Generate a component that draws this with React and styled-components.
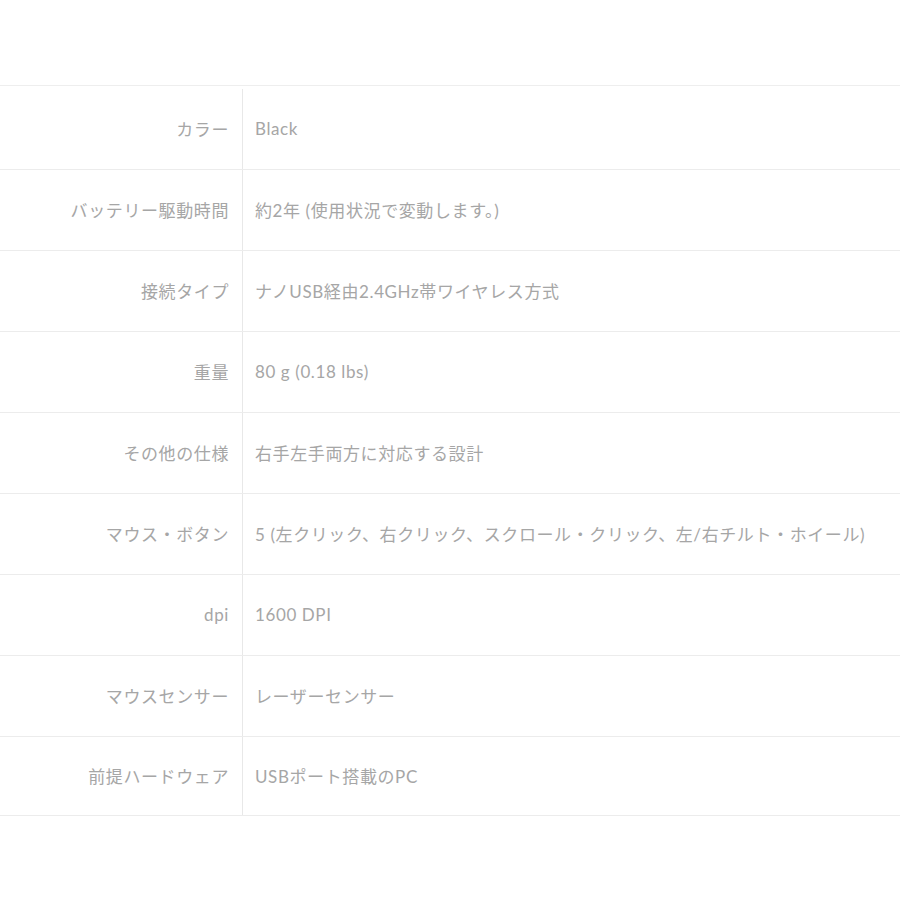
import React from "react";
import styled, { createGlobalStyle } from "styled-components";

const Global = createGlobalStyle`
  html, body { margin: 0; padding: 0; background: #fff; }
  body { font-family: Lato, "Noto Sans CJK JP", sans-serif; }
`;

const Page = styled.div`
  width: 900px;
  height: 900px;
  padding-top: 85px;
  box-sizing: border-box;
`;

const Table = styled.div`
  border-top: 1px solid #eeeeee;
  padding-top: 3px;
  display: flex;
  flex-direction: column;
`;

const Row = styled.div`
  display: grid;
  grid-template-columns: 243px 1fr;
  height: ${(p) => (p.$last ? 79 : 81)}px;
  box-sizing: border-box;
  border-bottom: 1px solid #ececec;
`;

const Cell = styled.div`
  display: flex;
  align-items: center;
  padding-bottom: 2px;
  font-size: 17px;
  font-weight: 400;
  letter-spacing: 0.6px;
  color: #a6a6a6;
  white-space: nowrap;
`;

const Label = styled(Cell)`
  justify-content: flex-end;
  padding-right: 13px;
  border-right: 1px solid #e8e8e8;
`;

const Value = styled(Cell)`
  padding-left: 12px;
`;

const rows = [
  ["カラー", "Black"],
  ["バッテリー駆動時間", "約2年 (使用状況で変動します。)"],
  ["接続タイプ", "ナノUSB経由2.4GHz帯ワイヤレス方式"],
  ["重量", "80 g (0.18 lbs)"],
  ["その他の仕様", "右手左手両方に対応する設計"],
  ["マウス・ボタン", "5 (左クリック、右クリック、スクロール・クリック、左/右チルト・ホイール)"],
  ["dpi", "1600 DPI"],
  ["マウスセンサー", "レーザーセンサー"],
  ["前提ハードウェア", "USBポート搭載のPC"],
];

export default function App() {
  return (
    <Page>
      <Global />
      <Table>
        {rows.map(([k, v], i) => (
          <Row key={k} $last={i === rows.length - 1}>
            <Label>{k}</Label>
            <Value>{v}</Value>
          </Row>
        ))}
      </Table>
    </Page>
  );
}
